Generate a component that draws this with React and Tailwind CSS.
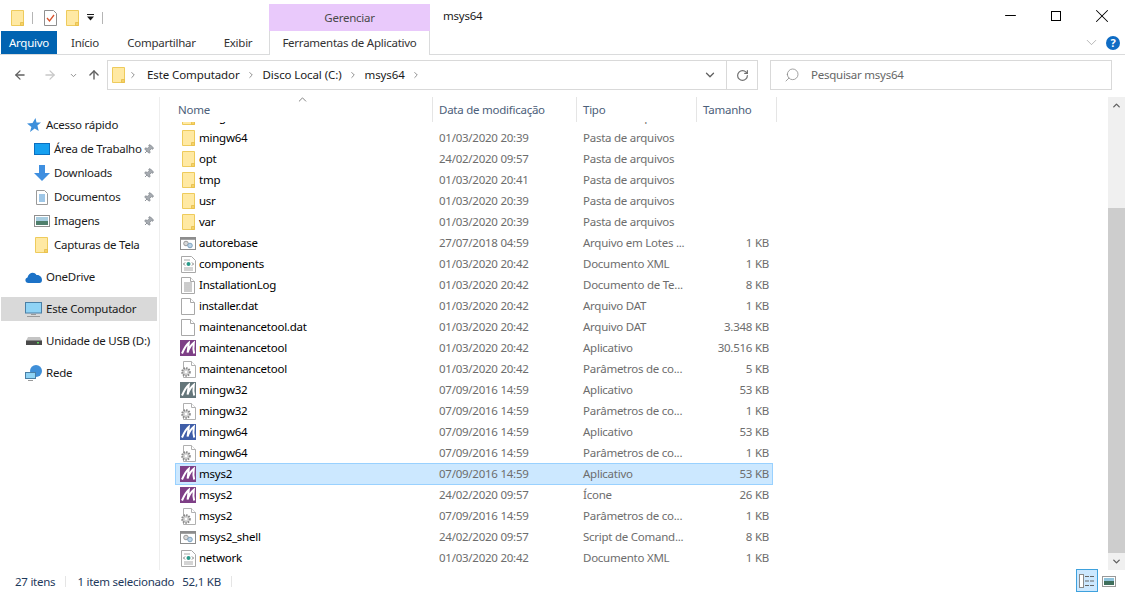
import { ChevronDown, ChevronRight, ChevronUp, ArrowLeft, ArrowRight, ArrowUp, RotateCw, Search, Minus, X, Pin } from 'lucide-react';

const FolderIcon = ({ className = '' }) => (
  <svg width="13" height="16" viewBox="0 0 13 16" className={className}>
    <path d="M.5.5h12v15H.5z" fill="#ffe9a3" stroke="#eecb5c" />
    <path d="M9.500 15.500v-3h3v3z" fill="#f6d365" stroke="#e6bd4a" strokeWidth=".8" />
  </svg>
);

const BlankIcon = ({ lines }) => (
  <svg width="14" height="17" viewBox="0 0 14 17">
    <path d="M.5.5h9l4 4v12H.5z" fill="#fff" stroke="#a8a8a8" />
    <path d="M9.500.5v4h4" fill="#fff" stroke="#a8a8a8" />
    {lines && <path d="M3 6h8M3 8h8M3 10h8M3 12h8M3 14h8" stroke="#9a9a9a" />}
  </svg>
);

const ConfigIcon = () => (
  <svg width="16" height="17" viewBox="0 0 16 17">
    <path d="M3.500.5h8l4 4v12h-12z" fill="#fff" stroke="#b0b0b0" />
    <path d="M11.500.5v4h4" fill="#fff" stroke="#b0b0b0" />
    <circle cx="6" cy="11" r="3.800" fill="#d4d4d4" stroke="#8a8a8a" strokeWidth="2" strokeDasharray="1.500 1" />
    <circle cx="6" cy="11" r="1.200" fill="#fff" />
  </svg>
);

const XmlIcon = () => (
  <svg width="15" height="17" viewBox="0 0 15 17">
    <path d="M.5.5h10l4 4v12H.5z" fill="#fff" stroke="#a8a8a8" />
    <path d="M3 12h9M3 14h9M3 4h6" stroke="#a8a8a8" />
    <circle cx="7.500" cy="8" r="2" fill="#2a9a8a" />
    <path d="M4 6.500 2.500 8 4 9.500M11 6.500 12.500 8 11 9.500" fill="none" stroke="#777" />
  </svg>
);

const BatIcon = () => (
  <svg width="16" height="13" viewBox="0 0 16 13">
    <rect x=".5" y=".5" width="15" height="12" fill="#fff" stroke="#8d8d8d" />
    <rect x="1" y="1" width="14" height="1.800" fill="#8d8d8d" />
    <circle cx="6" cy="6.500" r="2.300" fill="#d8d8d8" stroke="#999" />
    <circle cx="10" cy="8.500" r="2.300" fill="#bcd3e6" stroke="#7fa3c0" />
  </svg>
);

const MsysLogo = ({ color }) => (
  <svg width="16" height="16" viewBox="0 0 16 16">
    <rect width="16" height="16" fill={color} />
    <path d="M2 13.500C4 9 6 5 8.800 2.800L7.600 12.500C9 8 11 5 13.800 2.800 13.200 7 13.200 10 14.200 13.500" fill="none" stroke="#fff" strokeWidth="2" />
  </svg>
);

const PinMark = () => <Pin size={11} strokeWidth={2} className="rotate-45 text-[#8a8f96] fill-[#a6abb1]" />;

const iconFor = {
  folder: <FolderIcon />,
  bat: <BatIcon />,
  xml: <XmlIcon />,
  log: <BlankIcon lines />,
  dat: <BlankIcon />,
  cfg: <ConfigIcon />,
  purple: <MsysLogo color="#7e3f86" />,
  gray: <MsysLogo color="#64767a" />,
  blue: <MsysLogo color="#3f5ea8" />,
};

const files = [
  { icon: 'folder', name: 'mingw32', date: '01/03/2020 20:39', type: 'Pasta de arquivos', size: '' },
  { icon: 'folder', name: 'mingw64', date: '01/03/2020 20:39', type: 'Pasta de arquivos', size: '' },
  { icon: 'folder', name: 'opt', date: '24/02/2020 09:57', type: 'Pasta de arquivos', size: '' },
  { icon: 'folder', name: 'tmp', date: '01/03/2020 20:41', type: 'Pasta de arquivos', size: '' },
  { icon: 'folder', name: 'usr', date: '01/03/2020 20:39', type: 'Pasta de arquivos', size: '' },
  { icon: 'folder', name: 'var', date: '01/03/2020 20:39', type: 'Pasta de arquivos', size: '' },
  { icon: 'bat', name: 'autorebase', date: '27/07/2018 04:59', type: 'Arquivo em Lotes ...', size: '1 KB' },
  { icon: 'xml', name: 'components', date: '01/03/2020 20:42', type: 'Documento XML', size: '1 KB' },
  { icon: 'log', name: 'InstallationLog', date: '01/03/2020 20:42', type: 'Documento de Te...', size: '8 KB' },
  { icon: 'dat', name: 'installer.dat', date: '01/03/2020 20:42', type: 'Arquivo DAT', size: '1 KB' },
  { icon: 'dat', name: 'maintenancetool.dat', date: '01/03/2020 20:42', type: 'Arquivo DAT', size: '3.348 KB' },
  { icon: 'purple', name: 'maintenancetool', date: '01/03/2020 20:42', type: 'Aplicativo', size: '30.516 KB' },
  { icon: 'cfg', name: 'maintenancetool', date: '01/03/2020 20:42', type: 'Parâmetros de co...', size: '5 KB' },
  { icon: 'gray', name: 'mingw32', date: '07/09/2016 14:59', type: 'Aplicativo', size: '53 KB' },
  { icon: 'cfg', name: 'mingw32', date: '07/09/2016 14:59', type: 'Parâmetros de co...', size: '1 KB' },
  { icon: 'blue', name: 'mingw64', date: '07/09/2016 14:59', type: 'Aplicativo', size: '53 KB' },
  { icon: 'cfg', name: 'mingw64', date: '07/09/2016 14:59', type: 'Parâmetros de co...', size: '1 KB' },
  { icon: 'purple', name: 'msys2', date: '07/09/2016 14:59', type: 'Aplicativo', size: '53 KB', selected: true },
  { icon: 'purple', name: 'msys2', date: '24/02/2020 09:57', type: 'Ícone', size: '26 KB' },
  { icon: 'cfg', name: 'msys2', date: '07/09/2016 14:59', type: 'Parâmetros de co...', size: '1 KB' },
  { icon: 'bat', name: 'msys2_shell', date: '24/02/2020 09:57', type: 'Script de Comand...', size: '8 KB' },
  { icon: 'xml', name: 'network', date: '01/03/2020 20:42', type: 'Documento XML', size: '1 KB' },
];

const SideItem = ({ icon, label, pinned, indent, active, className = '' }) => (
  <div className={`flex items-center h-6 ${active ? 'bg-[#d9d9d9] ml-px w-[156px]' : ''} ${className}`}>
    <div className={`flex justify-center shrink-0 ${indent ? 'ml-[33px] w-[17px] mr-1' : active ? 'ml-6 w-[17px] mr-1' : 'ml-[25px] w-[17px] mr-1'}`}>{icon}</div>
    <span className="whitespace-nowrap">{label}</span>
    {pinned && <span className="ml-auto mr-[5px]"><PinMark /></span>}
  </div>
);

const Crumb = ({ label }) => (
  <>
    <span className="text-[#1a1a1a] tracking-[-0.1px]">{label}</span>
    <ChevronRight size={10} strokeWidth={2} className="text-[#7a7a7a] mx-[6.5px]" />
  </>
);

export default function App() {
  return (
    <div className="w-[1125px] h-[593px] bg-white overflow-hidden flex flex-col text-[11.5px] leading-4 tracking-[-0.25px] text-[#1a1a1a] font-['Noto_Sans','Open_Sans',sans-serif]">
      {/* title bar */}
      <div className="h-[31px] flex shrink-0">
        <div className="flex items-center pt-1 pl-[11px] w-[269px]">
          <FolderIcon />
          <div className="w-px h-3 bg-[#b5b5b5] ml-[8px] mr-[11px]" />
          <svg width="13" height="16" viewBox="0 0 13 16">
            <path d="M.5.5h9l3 3v12H.5z" fill="#fff" stroke="#8f8f8f" />
            <path d="m3 8 2.500 3L10 5" fill="none" stroke="#d9532c" strokeWidth="1.300" />
          </svg>
          <FolderIcon className="ml-[9px]" />
          <svg width="7" height="7" viewBox="0 0 7 7" className="ml-[8px]">
            <path d="M0 0h7v1H0zM0 2.500h7L3.500 6.500z" fill="#1a1a1a" />
          </svg>
          <div className="w-px h-3 bg-[#b5b5b5] ml-[8px]" />
        </div>
        <div className="w-[161px] h-[27px] mt-1 bg-[#e9c9fb] flex items-center justify-center text-[#4a4a4a]">Gerenciar</div>
        <span className="ml-[13px] mt-[8px]">msys64</span>
        <div className="ml-auto flex items-center text-black">
          <div className="w-[46px] flex justify-center"><Minus size={17} strokeWidth={1.400} /></div>
          <div className="w-[46px] flex justify-center"><div className="w-[10px] h-[10px] border border-black" /></div>
          <div className="w-[46px] flex justify-center"><X size={22} strokeWidth={1.100} /></div>
        </div>
      </div>

      {/* ribbon tabs */}
      <div className="h-6 flex shrink-0 border-b border-[#dadbdc] items-stretch">
        <div className="ml-px w-[56px] h-[23px] bg-[#0063b1] text-white flex items-center justify-center pt-px">Arquivo</div>
        <div className="w-[56px] flex items-center justify-center text-[#333] pt-px">Início</div>
        <div className="ml-[15px] w-[67px] flex items-center justify-center text-[#333] pt-px">Compartilhar</div>
        <div className="ml-[29px] w-[28px] flex items-center justify-center text-[#333] pt-px">Exibir</div>
        <div className="ml-[17px] w-[161px] h-6 bg-white border-x border-[#dadbdc] flex items-center justify-center text-[#333]">Ferramentas de Aplicativo</div>
        <div className="ml-auto flex items-center pr-[5px]">
          <ChevronDown size={17} strokeWidth={1} className="text-[#9a9a9a] mr-[6px]" />
          <div className="w-[14px] h-[14px] rounded-full bg-[#0f6cc4] text-white font-bold text-[11px] flex items-center justify-center">?</div>
        </div>
      </div>

      {/* address row */}
      <div className="h-[42px] flex items-center shrink-0 pb-[2px]">
        <ArrowLeft size={14} strokeWidth={2.200} className="ml-[13px] text-[#606060]" />
        <ArrowRight size={14} strokeWidth={2.200} className="ml-4 text-[#c8c8c8]" />
        <ChevronDown size={9} strokeWidth={2.500} className="ml-[12px] text-[#8a8a8a]" />
        <ArrowUp size={14} strokeWidth={2.400} className="ml-[9px] text-[#606060]" />
        <div className="ml-[6px] w-[651px] h-[30px] border border-[#d9d9d9] flex items-center">
          <FolderIcon className="ml-1" />
          <ChevronRight size={10} strokeWidth={2} className="text-[#7a7a7a] ml-[3px] mr-[9px]" />
          <Crumb label="Este Computador" />
          <Crumb label="Disco Local (C:)" />
          <Crumb label="msys64" />
          <div className="ml-auto flex items-center h-full">
            <ChevronDown size={14} strokeWidth={2.200} className="text-[#606060] mr-[9px]" />
            <div className="w-[31px] h-full border-l border-[#d9d9d9] flex items-center justify-center">
              <RotateCw size={13} strokeWidth={2.200} className="text-[#707070]" />
            </div>
          </div>
        </div>
        <div className="ml-3 w-[342px] h-[30px] border border-[#d9d9d9] flex items-center text-[#666]">
          <Search size={16} strokeWidth={1.200} className="ml-[13px] mr-[11px] -scale-x-100 text-[#8a8a8a]" />
          <span>Pesquisar msys64</span>
        </div>
      </div>

      {/* body */}
      <div className="flex-1 flex min-h-0">
        <aside className="w-[160px] shrink-0 border-r border-[#eeeeee] pt-4">
          <SideItem label="Acesso rápido" icon={
            <svg width="14" height="14" viewBox="0 0 14 14"><path d="m8.500 0 1 4.600H14l-3.600 3 1.300 5.400-4-2.600L3 14l1.400-5L0 5.500l5.500-.5z" fill="#3d8fdb" /></svg>
          } />
          <SideItem indent pinned label="Área de Trabalho" icon={
            <svg width="16" height="12" viewBox="0 0 16 12"><rect x=".5" y=".5" width="15" height="11" fill="#16a0f0" stroke="#0a6fc0" /></svg>
          } />
          <SideItem indent pinned label="Downloads" icon={
            <svg width="16" height="16" viewBox="0 0 16 16"><path d="M5 0h6v8h5l-8 8-8-8h5z" fill="#3f8fe0" /></svg>
          } />
          <SideItem indent pinned label="Documentos" icon={
            <svg width="12" height="15" viewBox="0 0 12 15"><path d="M.5.500h8l3 3v11H.5z" fill="#fff" stroke="#9a9a9a" /><path d="M3 5h6M3 7h6M3 9h6M3 11h6" stroke="#3f8fd0" /></svg>
          } />
          <SideItem indent pinned label="Imagens" icon={
            <svg width="16" height="12" viewBox="0 0 16 12"><rect x=".5" y=".5" width="15" height="11" fill="#fff" stroke="#8f8f8f" /><rect x="2" y="2" width="12" height="4" fill="#a8cde0" /><rect x="2" y="6" width="12" height="4" fill="#4f7f6c" /></svg>
          } />
          <SideItem indent label="Capturas de Tela" icon={<FolderIcon />} />
          <SideItem className="mt-2" label="OneDrive" icon={
            <svg width="17" height="11" viewBox="0 0 17 11"><path d="M3.500 11C0 11-.8 6.500 2.500 5.500 3.500 1 9-1 11.500 3c3-.5 5.500 2 5.500 5 0 2-1 3-2.500 3z" fill="#1c72c7" /></svg>
          } />
          <SideItem className="mt-2" active label="Este Computador" icon={
            <svg width="17" height="15" viewBox="0 0 17 15"><rect x=".5" y=".5" width="16" height="10.500" fill="#8fd3f5" stroke="#4a7fa5" /><path d="M6 12h5v1H6zM2 14h13v1H2z" fill="#9a9a9a" /></svg>
          } />
          <SideItem className="mt-2" label="Unidade de USB (D:)" icon={
            <svg width="16" height="8" viewBox="0 0 16 8"><path d="M2 0h12l2 4H0z" fill="#c4c4c4" /><rect y="3.500" width="16" height="4.500" fill="#4a4a4a" /><rect x="11" y="5" width="2" height="1.500" fill="#5fd35f" /></svg>
          } />
          <SideItem className="mt-2" label="Rede" icon={
            <svg width="17" height="16" viewBox="0 0 17 16"><circle cx="11" cy="6" r="6" fill="#3f8fd8" /><rect x=".5" y="7.500" width="10" height="6" fill="#8fd3f5" stroke="#4a7fa5" /><path d="M3 15h5v1H3z" fill="#9a9a9a" /></svg>
          } />
        </aside>

        <main className="flex-1 flex flex-col min-w-0">
          {/* column headers */}
          <div className="h-[25px] flex shrink-0 text-[#4c607a] relative">
            <ChevronUp size={13} strokeWidth={1.500} className="absolute left-[136px] -top-[4px] text-[#666]" />
            <div className="w-[273px] pl-[18px] pt-[5px] border-r border-[#e5e5e5]">Nome</div>
            <div className="w-[144px] pl-[6px] pt-[5px] border-r border-[#e5e5e5]">Data de modificação</div>
            <div className="w-[120px] pl-[6px] pt-[5px] border-r border-[#e5e5e5]">Tipo</div>
            <div className="w-[80px] pl-[6px] pt-[5px] border-r border-[#e5e5e5]">Tamanho</div>
          </div>
          <div className="flex-1 overflow-hidden">
            <div className="-mt-[16px] ml-[15px]">
              {files.map((f, i) => (
                <div key={i} className={`w-[598px] flex items-center border ${f.selected ? 'h-[22px] -mb-px bg-[#cce8ff] border-[#99d1ff]' : 'h-[21px] pt-px border-transparent'}`}>
                  <div className="w-[22px] pl-[2px] flex justify-center shrink-0">{iconFor[f.icon]}</div>
                  <span className="w-[241px] pl-[1px] shrink-0 text-black">{f.name}</span>
                  <span className="w-[144px] shrink-0 text-[#6d6d6d]">{f.date}</span>
                  <span className="w-[120px] shrink-0 text-[#6d6d6d] whitespace-nowrap">{f.type}</span>
                  <span className="w-[66px] shrink-0 text-right text-[#6d6d6d]">{f.size}</span>
                </div>
              ))}
            </div>
          </div>
        </main>

        {/* scrollbar */}
        <div className="w-[17px] shrink-0 bg-[#f0f0f0] flex flex-col">
          <div className="h-[17px] flex items-center justify-center"><ChevronUp size={11} strokeWidth={3} className="text-[#606060]" /></div>
          <div className="h-[94px]" />
          <div className="flex-1 bg-[#cdcdcd]" />
          <div className="h-[17px] flex items-center justify-center"><ChevronDown size={11} strokeWidth={3} className="text-[#606060]" /></div>
        </div>
      </div>

      {/* status bar */}
      <div className="h-[23px] flex items-center shrink-0 text-[#1e395b] pl-[15px]">
        <span>27 itens</span>
        <div className="w-px h-[11px] bg-[#e5e5e5] ml-[10px] mr-[11px]" />
        <span>1 item selecionado</span>
        <span className="ml-[8px]">52,1 KB</span>
        <div className="w-px h-[11px] bg-[#e5e5e5] ml-[10px]" />
        <div className="ml-auto flex items-center pr-[5px]">
          <div className="w-[22px] h-[23px] -translate-y-px bg-[#cce8ff] border border-[#3ea1dd] flex items-center justify-center">
            <svg width="16" height="14" viewBox="0 0 16 14">
              <rect x=".5" y=".5" width="4" height="13" fill="#fff" stroke="#8a8a8a" />
              <path d="M6 2.500h4M11 2.500h4M6 7h4M11 7h4M6 11.500h4M11 11.500h4" stroke="#666" />
            </svg>
          </div>
          <div className="w-[22px] flex justify-center">
            <svg width="14" height="11" viewBox="0 0 14 11"><rect x=".5" y=".5" width="13" height="10" fill="#fff" stroke="#999" /><rect x="2" y="2" width="10" height="3" fill="#8fc3dc" /><rect x="2" y="5" width="10" height="4" fill="#3f6f5c" /></svg>
          </div>
        </div>
      </div>
    </div>
  );
}
